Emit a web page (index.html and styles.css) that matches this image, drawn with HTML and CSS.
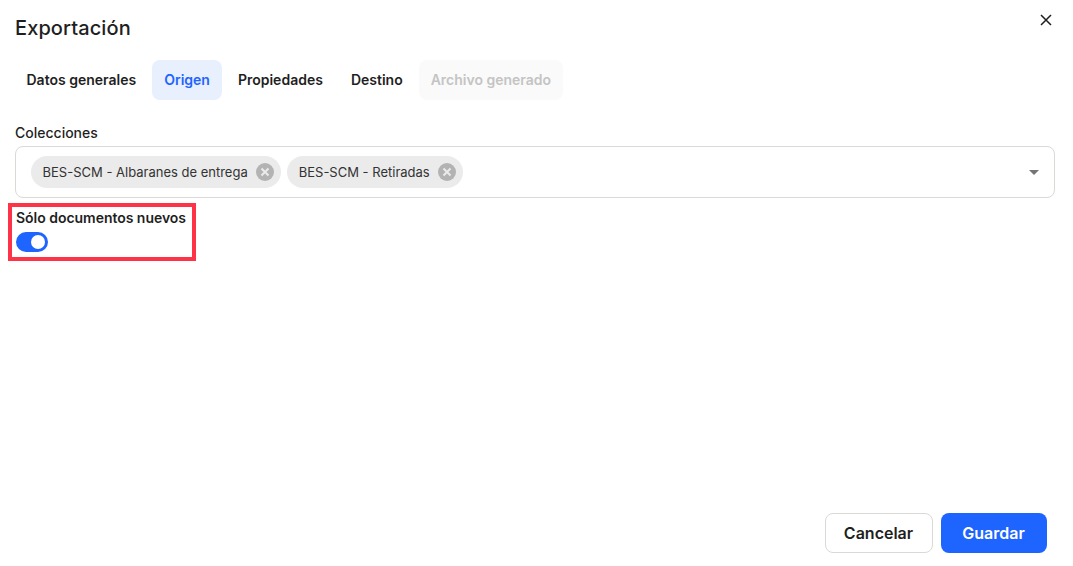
FILE: index.html
```html
<!DOCTYPE html>
<html lang="es">
<head>
<meta charset="utf-8">
<title>Exportación</title>
<link rel="stylesheet" href="styles.css">
</head>
<body>
<div class="dialog">
  <button class="close" aria-label="Cerrar">
    <svg width="12" height="12" viewBox="0 0 12 12"><path d="M1 1l10 10M11 1L1 11" stroke="#1f1f1f" stroke-width="1.5" fill="none"/></svg>
  </button>
  <h1 class="title">Exportación</h1>
  <nav class="tabs">
    <span class="tab">Datos generales</span>
    <span class="tab active">Origen</span>
    <span class="tab">Propiedades</span>
    <span class="tab">Destino</span>
    <span class="tab disabled">Archivo generado</span>
  </nav>
  <div class="field-label">Colecciones</div>
  <div class="select">
    <span class="chip">BES-SCM - Albaranes de entrega
      <svg class="chip-x" width="18" height="18" viewBox="0 0 18 18"><circle cx="9" cy="9" r="9" fill="#b3b3b3"/><path d="M5.5 5.5l7 7M12.5 5.5l-7 7" stroke="#ebebeb" stroke-width="2" fill="none"/></svg>
    </span>
    <span class="chip">BES-SCM - Retiradas
      <svg class="chip-x" width="18" height="18" viewBox="0 0 18 18"><circle cx="9" cy="9" r="9" fill="#b3b3b3"/><path d="M5.5 5.5l7 7M12.5 5.5l-7 7" stroke="#ebebeb" stroke-width="2" fill="none"/></svg>
    </span>
    <span class="caret"></span>
  </div>
  <div class="option">
    <div class="option-label">Sólo documentos nuevos</div>
    <span class="toggle"><span class="knob"></span></span>
    <span class="highlight"></span>
  </div>
  <footer class="actions">
    <button class="btn secondary">Cancelar</button>
    <button class="btn primary">Guardar</button>
  </footer>
</div>
</body>
</html>
```
FILE: styles.css
```css
* { box-sizing: border-box; }
html, body { margin: 0; height: 100%; background: #fff; overflow: hidden; }
body { font-family: Inter, "Noto Sans", sans-serif; color: #1f1f1f; }
.dialog { position: relative; height: 566px; padding: 16px 26px 13px 15px; display: flex; flex-direction: column; }
.close { position: absolute; top: 14px; right: 21px; width: 12px; height: 12px; padding: 0; border: 0; background: none; display: block; line-height: 0; }
.title { margin: 0; font-size: 20px; line-height: 24px; font-weight: 500; letter-spacing: 0.1px; }
.tabs { display: flex; gap: 4px; margin: 20px 0 0 -0.5px; }
.tab { height: 40px; padding: 0 12px; border-radius: 8px; font-size: 14px; font-weight: 600; line-height: 40px; white-space: nowrap; }
.tab.active { background: #e8effd; color: #1e64ff; }
.tab.disabled { background: #fafafa; color: #c4c4c4; }
.field-label { margin-top: 24px; font-size: 14px; line-height: 18px; font-weight: 500; }
.select { margin: 4px -8px 0 0; height: 52px; border: 1px solid #d9d9d6; border-radius: 8px; padding: 9px 15px; display: flex; align-items: center; gap: 6px; position: relative; }
.chip { height: 32px; border-radius: 16px; background: #ebebeb; padding: 0 7px 0 11.5px; display: flex; align-items: center; gap: 8.5px; font-size: 13px; color: #333; white-space: nowrap; }
.caret { position: absolute; right: 15px; top: 23px; width: 0; height: 0; border-left: 5px solid transparent; border-right: 5px solid transparent; border-top: 5px solid #757575; }
.option { position: relative; margin-top: 10px; padding-left: 1px; }
.option-label { padding-top: 1px; font-size: 14px; line-height: 18px; font-weight: 600; letter-spacing: -0.03px; }
.toggle { display: block; margin-top: 5px; width: 32px; height: 20px; border-radius: 10px; background: #1e64ff; position: relative; }
.knob { position: absolute; right: 3px; top: 3px; width: 14px; height: 14px; border-radius: 50%; background: #fff; }
.highlight { position: absolute; left: -7px; top: -5px; width: 188px; height: 58px; border: 4px solid #ff3347; pointer-events: none; }
.actions { margin-top: auto; display: flex; justify-content: flex-end; gap: 8px; }
.btn { height: 40px; border-radius: 8px; font: 600 16px/1 Inter, sans-serif; cursor: pointer; padding: 0 1px 0 0; }
.secondary { width: 108px; background: #fff; border: 1px solid #d9d9d6; color: #1f1f1f; }
.primary { width: 106px; background: #1e64ff; border: 0; color: #fff; }
```
